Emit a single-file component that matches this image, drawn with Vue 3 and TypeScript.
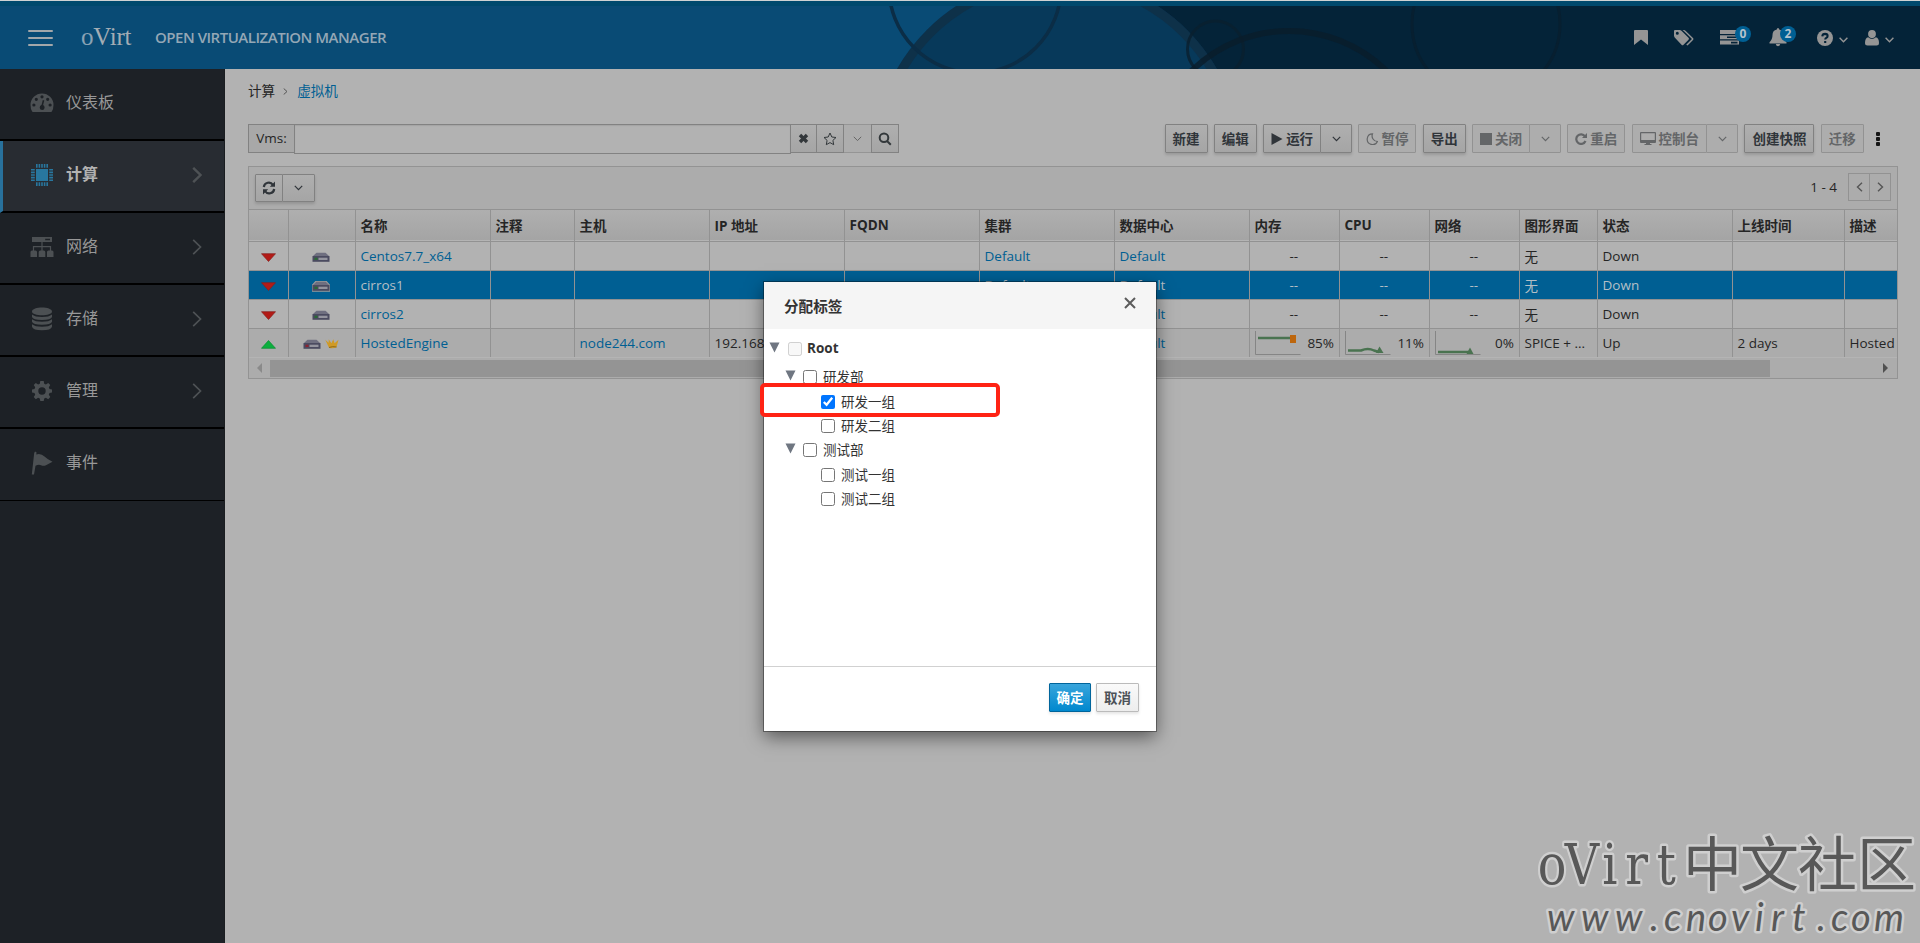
<script setup lang="ts">
import { ref } from 'vue';

interface MenuItem {
  label: string;
  icon: string;
  children: boolean;
}

interface Action {
  label: string;
  icon?: string;
  enabled: boolean;
  split?: boolean;
}

interface Vm {
  name: string;
  host: string;
  ip: string;
  cluster: string;
  dc: string;
  usage: string[];
  graphics: string;
  status: string;
  uptime: string;
  description: string;
}

interface Tag {
  label: string;
  level: number;
  checked: boolean;
  disabled?: boolean;
}

const menu: MenuItem[] = [
  { label: '仪表板', icon: 'dashboard', children: false },
  { label: '计算', icon: 'compute', children: true },
  { label: '网络', icon: 'network', children: true },
  { label: '存储', icon: 'storage', children: true },
  { label: '管理', icon: 'admin', children: true },
  { label: '事件', icon: 'events', children: false },
];
const activeMenu = ref('计算');

const actions: Action[] = [
  { label: '新建', enabled: true },
  { label: '编辑', enabled: true },
  { label: '运行', icon: 'play', enabled: true, split: true },
  { label: '暂停', icon: 'moon', enabled: false },
  { label: '导出', enabled: true },
  { label: '关闭', icon: 'stop', enabled: false, split: true },
  { label: '重启', icon: 'redo', enabled: false },
  { label: '控制台', icon: 'screen', enabled: false, split: true },
  { label: '创建快照', enabled: true },
  { label: '迁移', enabled: false },
];

const columns = ['', '', '名称', '注释', '主机', 'IP 地址', 'FQDN', '集群', '数据中心', '内存', 'CPU', '网络', '图形界面', '状态', '上线时间', '描述'];

const down = { host: '', ip: '', cluster: 'Default', dc: 'Default', usage: ['--', '--', '--'], graphics: '无', status: 'Down', uptime: '', description: '' };
const vms: Vm[] = [
  { name: 'Centos7.7_x64', ...down },
  { name: 'cirros1', ...down },
  { name: 'cirros2', ...down },
  {
    name: 'HostedEngine',
    host: 'node244.com',
    ip: '192.168.',
    cluster: 'Default',
    dc: 'Default',
    usage: ['85%', '11%', '0%'],
    graphics: 'SPICE + ...',
    status: 'Up',
    uptime: '2 days',
    description: 'Hosted',
  },
];
const selectedVm = ref('cirros1');

const tags = ref<Tag[]>([
  { label: 'Root', level: 0, checked: false, disabled: true },
  { label: '研发部', level: 1, checked: false },
  { label: '研发一组', level: 2, checked: true },
  { label: '研发二组', level: 2, checked: false },
  { label: '测试部', level: 1, checked: false },
  { label: '测试一组', level: 2, checked: false },
  { label: '测试二组', level: 2, checked: false },
]);
const showDialog = ref(true);
</script>

<template>
  <div class="page">
    <header class="masthead">
      <svg class="masthead-art" width="1060" height="63" viewBox="860 6 1060 63">
        <path d="M1057 6H1920V69H1057Z" fill="#042338" />
        <circle cx="1057" cy="160" r="184" fill="#07395a" />
        <circle cx="1057" cy="160" r="179.500" fill="none" stroke="#122c40" stroke-opacity=".65" stroke-width="9" />
        <circle cx="975" cy="-13" r="86" fill="none" stroke="#0b2d46" stroke-width="3.500" />
        <circle cx="1215.500" cy="49" r="28" fill="none" stroke="#0a1f2e" stroke-opacity=".8" stroke-width="3" />
        <circle cx="1289" cy="170" r="139" fill="none" stroke="#0a1d2b" stroke-opacity=".8" stroke-width="6" />
        <circle cx="1486" cy="24" r="74" fill="none" stroke="#071f30" stroke-width="3" />
      </svg>
      <div class="hamburger"><i></i><i></i><i></i></div>
      <div class="logo"><span>o</span>Virt</div>
      <div class="product">OPEN VIRTUALIZATION MANAGER</div>
      <nav class="tools">
        <svg class="t-bookmark" width="14" height="15" viewBox="0 0 14 15"><path d="M1 0H13Q14 0 14 1V15L7 9.500 0 15V1Q0 0 1 0Z" /></svg>
        <svg class="t-tags" width="20" height="16" viewBox="0 0 20 16">
          <path fill-rule="evenodd" d="M0 1Q0 0 1 0H6L7.500 .7 14.500 7.700Q15.500 8.700 14.500 9.700L9.500 14.700Q8.500 15.700 7.500 14.700L.7 7.500 0 6ZM3.300 1.800A1.500 1.500 0 1 0 3.300 4.800 1.500 1.500 0 1 0 3.300 1.800Z" />
          <path d="M8.500 0H10.200L11.500 .7 19 8Q20 9 19 10L13.500 15.500 12.200 14.800 17.500 9.500Q18 9 17.500 8.500L9.500 .7Z" />
        </svg>
        <div class="with-badge t-tasks">
          <svg width="19" height="15" viewBox="0 0 19 15"><path fill-rule="evenodd" d="M0 0H19V4H0ZM0 5.300H19V9.300H0ZM0 10.600H19V14.600H0ZM7 6.500V8.100H17.500V6.500ZM11 11.800V13.400H17.500V11.800Z" /></svg>
          <b>0</b>
        </div>
        <div class="with-badge t-bell">
          <svg width="18" height="19" viewBox="0 0 18 19"><path d="M9 0Q10.200 0 10.200 1.600 14.500 2.500 14.500 7 14.500 11.500 17.500 14.200V15.400H.5V14.200Q3.500 11.500 3.500 7 3.500 2.500 7.800 1.600 7.800 0 9 0ZM6.800 16H11.200Q10.800 18.200 9 18.200 7.200 18.200 6.800 16Z" /></svg>
          <b>2</b>
        </div>
        <div class="drop t-help">
          <svg width="16" height="16" viewBox="0 0 16 16">
            <circle cx="8" cy="8" r="8" />
            <path class="cut" d="M5.300 6.300Q5.500 3.900 8.100 3.900 10.600 4 10.600 6 10.600 7.300 9.300 7.900 8.300 8.400 8.200 9.500M8.200 10.900V12.900" />
          </svg>
          <svg class="caret" width="9" height="6" viewBox="0 0 9 6"><path d="M.6 .7 4.500 4.700 8.400 .7" /></svg>
        </div>
        <div class="drop t-user">
          <svg width="14" height="16" viewBox="0 0 14 16"><path d="M7 0A3.900 4.100 0 1 1 7 8.200 3.900 4.100 0 1 1 7 0ZM3.200 7.300Q7 10.500 10.800 7.300 14 8 14 13 14 15.500 11.500 15.500H2.500Q0 15.500 0 13 0 8 3.200 7.300Z" /></svg>
          <svg class="caret" width="9" height="6" viewBox="0 0 9 6"><path d="M.6 .7 4.500 4.700 8.400 .7" /></svg>
        </div>
      </nav>
    </header>

    <div class="body">
      <aside class="sidebar">
        <div
          v-for="item in menu"
          :key="item.label"
          class="menu-item"
          :class="{ active: item.label === activeMenu }"
          @click="activeMenu = item.label"
        >
          <svg class="menu-icon" width="24" height="24" viewBox="0 0 24 24">
            <path
              v-if="item.icon === 'dashboard'"
              fill-rule="evenodd"
              d="M12 2.500A11.500 11.500 0 0 1 23.500 14Q23.500 18 21.800 20.500 21.400 21 20.500 21H3.500Q2.600 21 2.200 20.500 .5 18 .5 14A11.500 11.500 0 0 1 12 2.500ZM12 4.200a1.600 1.600 0 1 0 0 3.200 1.600 1.600 0 1 0 0-3.200ZM6.300 6.700a1.600 1.600 0 1 0 0 3.200 1.600 1.600 0 1 0 0-3.200ZM17.700 6.700a1.600 1.600 0 1 0 0 3.200 1.600 1.600 0 1 0 0-3.200ZM3.900 12.400a1.600 1.600 0 1 0 0 3.200 1.600 1.600 0 1 0 0-3.200ZM20.100 12.400a1.600 1.600 0 1 0 0 3.200 1.600 1.600 0 1 0 0-3.200ZM12.800 9 11.600 13.800Q9.600 14.600 9.700 16.700 10 18.900 12.200 19 14.400 18.900 14.600 16.700 14.600 15 13.100 14.100L14.300 9.400Z"
            />
            <template v-else-if="item.icon === 'compute'">
              <path d="M6 6H18V18H6Z" />
              <path class="pins" d="M6.800 1V4.800M9.400 1V4.800M12 1V4.800M14.600 1V4.800M17.200 1V4.800M6.800 19.200V23M9.400 19.200V23M12 19.200V23M14.600 19.200V23M17.200 19.200V23M1 6.800H4.800M1 9.400H4.800M1 12H4.800M1 14.600H4.800M1 17.200H4.800M19.200 6.800H23M19.200 9.400H23M19.200 12H23M19.200 14.600H23M19.200 17.200H23" />
            </template>
            <path
              v-else-if="item.icon === 'network'"
              fill-rule="evenodd"
              d="M2 2H22V7H2ZM15.200 3.700V5.300H20V3.700ZM11.400 7H12.600V11H21.100V15.500H22Q23.500 15.500 23.500 17V22H17V17Q17 15.500 18.500 15.500H19.900V12.200H12.600V15.500H13.800Q15.300 15.500 15.300 17V22H8.700V17Q8.700 15.500 10.200 15.500H11.400V12.200H4.100V15.500H5.500Q7 15.500 7 17V22H.5V17Q.5 15.500 2 15.500H2.900V11H11.400Z"
            />
            <path
              v-else-if="item.icon === 'storage'"
              d="M12 .5C17 .5 22 2 22 4.500S17 8.300 12 8.300 2 7 2 4.500 7 .5 12 .5ZM2 7.500Q5 10 12 10T22 7.500V10Q21 13 12 13T2 10ZM2 12.300Q5 14.800 12 14.800T22 12.300V14.800Q21 17.800 12 17.800T2 14.800ZM2 17.200Q5 19.700 12 19.700T22 17.200V19.700Q21 23.300 12 23.300T2 19.700Z"
            />
            <path
              v-else-if="item.icon === 'admin'"
              fill-rule="evenodd"
              d="M10.300 2H13.700L14.200 4.700 15.900 5.400 18.200 3.900 20.300 6 18.800 8.200 19.500 9.900 22 10.400V13.600L19.500 14.100 18.800 15.800 20.300 18.100 18.200 20.200 15.900 18.700 14.200 19.400 13.700 22H10.300L9.800 19.400 8.100 18.700 5.800 20.200 3.700 18.100 5.200 15.800 4.500 14.100 2 13.600V10.400L4.500 9.900 5.200 8.200 3.700 6 5.800 3.900 8.100 5.400 9.800 4.700ZM12 8.300A3.700 3.700 0 1 0 12 15.700 3.700 3.700 0 1 0 12 8.300Z"
            />
            <path v-else d="M5 .5 6.500 1.200 6.300 3.400Q11 2 14.500 5.500 17 8 22.500 10.800L16 14.200Q13.500 15.500 11 14.200 8.500 13.200 5.500 14.800L4 23.500H1.800L4.200 2Z" />
          </svg>
          <span class="menu-label">{{ item.label }}</span>
          <svg v-if="item.children" class="menu-chevron" width="10" height="16" viewBox="0 0 10 16"><path d="M1.200 .8 8.500 8 1.200 15.200" /></svg>
        </div>
      </aside>

      <main class="content">
        <div class="breadcrumb">
          <span>计算</span>
          <svg width="5" height="7" viewBox="0 0 5 7"><path d="M.7 .5 4 3.500 .7 6.500" /></svg>
          <a>虚拟机</a>
        </div>

        <div class="action-row">
          <div class="search">
            <span class="search-prefix">Vms:</span>
            <div class="search-input"></div>
            <button class="clear"><svg width="11" height="11" viewBox="0 0 11 11"><path class="bold" d="M2 2 9 9M9 2 2 9" /></svg></button>
            <button class="star"><svg width="14" height="14" viewBox="0 0 14 14"><path d="M7 1 8.800 5 13 5.500 9.900 8.400 10.700 12.700 7 10.600 3.300 12.700 4.100 8.400 1 5.500 5.200 5Z" /></svg></button>
            <button class="dim"><svg width="9" height="6" viewBox="0 0 9 6"><path d="M.8 .8 4.500 4.600 8.200 .8" /></svg></button>
            <button class="go"><svg width="14" height="14" viewBox="0 0 14 14"><circle cx="6" cy="5.800" r="4.300" class="lens" /><path class="lens" d="M9 9 12.800 12.800" /></svg></button>
          </div>

          <div class="actions">
            <div v-for="a in actions" :key="a.label" class="btn-group" :class="{ disabled: !a.enabled }">
              <button>
                <svg v-if="a.icon === 'play'" width="12" height="12" viewBox="0 0 12 12"><path d="M.5 0 11.500 6 .5 12Z" /></svg>
                <svg v-else-if="a.icon === 'moon'" width="12" height="12" viewBox="0 0 12 12"><path class="line" d="M6.500 .8A5.400 5.400 0 1 0 11.500 8.500 5.600 5.600 0 0 1 6.500 .8Z" /></svg>
                <svg v-else-if="a.icon === 'stop'" width="12" height="12" viewBox="0 0 12 12"><path d="M0 0H12V12H0Z" /></svg>
                <svg v-else-if="a.icon === 'redo'" width="12" height="12" viewBox="0 0 12 12"><path class="thick" d="M10 3.300A4.800 4.800 0 1 0 10.500 8" /><path d="M12 0V5H7Z" /></svg>
                <svg v-else-if="a.icon === 'screen'" width="16" height="13" viewBox="0 0 16 13"><path fill-rule="evenodd" d="M1 0H15Q16 0 16 1V10Q16 11 15 11H10V12H11.500V13H4.500V12H6V11H1Q0 11 0 10V1Q0 0 1 0ZM1.200 1.200V8H14.800V1.200Z" /></svg>
                <span>{{ a.label }}</span>
              </button>
              <button v-if="a.split" class="toggle"><svg width="9" height="6" viewBox="0 0 9 6"><path class="line" d="M.8 .8 4.500 4.600 8.200 .8" /></svg></button>
            </div>
            <div class="kebab"><i></i><i></i><i></i></div>
          </div>
        </div>

        <section class="panel">
          <div class="panel-bar">
            <div class="btn-group refresh">
              <button>
                <svg width="14" height="14" viewBox="0 0 14 14"><path class="thick" d="M1.800 6A5 5 0 0 1 11 4M12.200 8A5 5 0 0 1 3 10" /><path d="M13 .5V5.800H7.800ZM1 13.500V8.200H6.200Z" /></svg>
              </button>
              <button class="toggle"><svg width="9" height="6" viewBox="0 0 9 6"><path class="line" d="M.8 .8 4.500 4.600 8.200 .8" /></svg></button>
            </div>
            <span class="range">1 - 4</span>
            <div class="pager">
              <span><svg width="7" height="10" viewBox="0 0 7 10"><path d="M6 .8 1.500 5 6 9.200" /></svg></span>
              <span><svg width="7" height="10" viewBox="0 0 7 10"><path d="M1 .8 5.500 5 1 9.200" /></svg></span>
            </div>
          </div>

          <div class="row head">
            <div v-for="(c, i) in columns" :key="i" class="cell">{{ c }}</div>
          </div>
          <div
            v-for="vm in vms"
            :key="vm.name"
            class="row"
            :class="{ selected: vm.name === selectedVm, up: vm.status === 'Up' }"
            @click="selectedVm = vm.name"
          >
            <div class="cell icon-cell">
              <svg v-if="vm.status === 'Up'" class="state" width="15" height="9" viewBox="0 0 15 9"><path d="M7.500 .5 14.500 8.300H.5Z" fill="#0caf3e" stroke="#0a8c31" stroke-width=".7" /></svg>
              <svg v-else class="state" width="15" height="9" viewBox="0 0 15 9"><path d="M.5 .7H14.500L7.500 8.500Z" fill="#b31b17" stroke="#86201d" stroke-width=".7" /></svg>
            </div>
            <div class="cell icon-cell servers">
              <svg width="18" height="11" viewBox="0 0 18 11">
                <path class="server-halo" d="M4 .5H14L17.500 4.500V10H.5V4.500Z" />
                <path d="M4.500 .8H13.500L17 4H1Z" fill="#6f6f80" />
                <path d="M.5 4H17.500V9.800H.5Z" fill="#4b4b60" />
                <path d="M6.500 5.700H15.500V8H6.500Z" fill="#94949e" />
                <path d="M2.500 5.700H5.500V8H2.500Z" :fill="vm.status === 'Up' ? '#8e2430' : '#2a6a35'" />
              </svg>
              <svg v-if="vm.status === 'Up'" width="14" height="10" viewBox="0 0 14 10"><path d="M.3 .8 3.600 3.800 3.800 .3 6.400 4.300 8.300 .3 9.600 4.300 13.500 .8 11.500 8.300Q7.500 10 4 8.700Z" fill="#d09a25" /><path d="M4 8.500Q7.500 7 11.500 8" fill="none" stroke="#8d6a1c" /></svg>
            </div>
            <div class="cell link">{{ vm.name }}</div>
            <div class="cell"></div>
            <div class="cell link">{{ vm.host }}</div>
            <div class="cell">{{ vm.ip }}</div>
            <div class="cell"></div>
            <div class="cell link">{{ vm.cluster }}</div>
            <div class="cell link">{{ vm.dc }}</div>
            <div v-for="(u, i) in vm.usage" :key="i" class="cell usage">
              <svg v-if="vm.status === 'Up'" width="46" height="24" viewBox="0 0 46 24">
                <path d="M.5 0V23.500H45.500" fill="none" stroke="#858585" />
                <template v-if="i === 0">
                  <path d="M3 7H35" stroke="#4a7350" stroke-width="2.500" />
                  <path d="M35 4H41V12H35Z" fill="#bd660d" />
                </template>
                <template v-else-if="i === 1">
                  <path d="M3 19.500H16Q23 16.500 29 19.500L34 21" fill="none" stroke="#4a7350" stroke-width="2.500" />
                  <path d="M34.500 15.500 38.500 22H31Z" fill="#4a7350" />
                </template>
                <template v-else>
                  <path d="M3 21H35" stroke="#4a7350" stroke-width="2.500" />
                  <path d="M35 16.500 38.500 23H31.500Z" fill="#4a7350" />
                </template>
              </svg>
              <span>{{ u }}</span>
            </div>
            <div class="cell">{{ vm.graphics }}</div>
            <div class="cell">{{ vm.status }}</div>
            <div class="cell">{{ vm.uptime }}</div>
            <div class="cell">{{ vm.description }}</div>
          </div>

          <div class="scrollbar">
            <svg width="5" height="10" viewBox="0 0 5 10"><path d="M5 0V10L0 5Z" fill="#8a8a8a" /></svg>
            <div class="track"><div class="thumb"></div></div>
            <svg width="5" height="10" viewBox="0 0 5 10"><path d="M0 0V10L5 5Z" fill="#505050" /></svg>
          </div>
        </section>
      </main>
    </div>

    <svg class="watermark" width="390" height="143" viewBox="1530 800 390 143">
      <text class="wm-latin" transform="translate(1530 884) scale(.85 1)" x="9 41 85 112 149">oVirt</text>
      <text class="wm-cjk" y="886" x="1683 1740 1798 1857">中文社区</text>
      <text class="wm-url" y="931" x="1547 1581 1615 1650 1664 1686 1708 1731 1755 1771 1792 1817 1831 1851 1874">www.cnovirt.com</text>
    </svg>

    <div v-if="showDialog" class="dialog">
      <div class="dialog-header">
        <h4>分配标签</h4>
        <svg width="12" height="12" viewBox="0 0 12 12" @click="showDialog = false"><path d="M1 1 11 11M11 1 1 11" /></svg>
      </div>
      <div class="dialog-body">
        <div v-for="tag in tags" :key="tag.label" class="tag" :class="'level-' + tag.level">
          <svg v-if="tag.level < 2" width="11" height="11" viewBox="0 0 11 11"><path d="M.5 .5H10.500L5.500 10.500Z" /></svg>
          <input v-model="tag.checked" type="checkbox" :disabled="tag.disabled" />
          <span>{{ tag.label }}</span>
        </div>
        <div class="highlight"></div>
      </div>
      <div class="dialog-footer">
        <button class="primary" @click="showDialog = false">确定</button>
        <button @click="showDialog = false">取消</button>
      </div>
    </div>
  </div>
</template>

<style>
body {
  background: #b2b2b2;
  overflow: hidden;
}
</style>

<style scoped>
.page {
  position: relative;
  display: flex;
  flex-direction: column;
  width: 1920px;
  height: 943px;
  overflow: hidden;
  background: #b2b2b2;
  color: #252525;
  font-family: 'Open Sans', 'Noto Sans CJK SC', sans-serif;
  font-size: 13.5px;
}

.page * {
  box-sizing: border-box;
}

svg {
  display: block;
  flex: none;
}

button {
  font-family: inherit;
  font-size: inherit;
}

/* masthead */
.masthead {
  position: relative;
  display: flex;
  align-items: center;
  flex: none;
  height: 69px;
  padding: 0 26px 0 28px;
  border-top: 1px solid #cfd2d3;
  background: linear-gradient(#00496d 5px, #094b75 5px);
}

.masthead-art {
  position: absolute;
  right: 0;
  bottom: 0;
}

.hamburger {
  display: flex;
  flex-direction: column;
  gap: 5px;
  width: 25px;
  padding-top: 6px;
}

.hamburger i {
  height: 2px;
  border-radius: 1px;
  background: #a3a7aa;
}

.logo {
  width: 75px;
  padding: 4px 0 0 28px;
  color: #a3adb4;
  font-family: 'Liberation Serif', serif;
  font-size: 25px;
  line-height: 28px;
  letter-spacing: -0.2px;
}

.logo span {
  color: #8aa2b4;
}

.product {
  padding-top: 4px;
  margin-left: 27px;
  color: #94a7b5;
  font-size: 15px;
  font-weight: 600;
  letter-spacing: -0.48px;
  white-space: nowrap;
}

.tools {
  position: relative;
  display: flex;
  align-items: center;
  margin-left: auto;
  padding-top: 5px;
  fill: #959595;
}

.t-tags {
  margin-left: 26px;
}

.t-tasks {
  margin-left: 26px;
}

.t-bell {
  margin-left: 30px;
}

.t-help {
  margin-left: 30px;
}

.t-user {
  margin-left: 17px;
}

.with-badge {
  position: relative;
}

.with-badge b {
  position: absolute;
  top: -4px;
  left: 15px;
  width: 16px;
  height: 16px;
  border-radius: 50%;
  background: #005f93;
  color: #b4c3cd;
  font-size: 12px;
  line-height: 15px;
  text-align: center;
}

.t-bell b {
  top: -2px;
  left: 11px;
}

.drop {
  display: flex;
  align-items: center;
  gap: 6px;
}

.caret {
  margin-top: 4px;
  fill: none;
  stroke: #959595;
  stroke-width: 1.4;
}

.cut {
  fill: none;
  stroke: #042338;
  stroke-width: 2.1;
}

.body {
  display: flex;
  flex: 1;
}

/* sidebar */
.sidebar {
  width: 225px;
  border-right: 1px solid #1a1d20;
  background: #1d2126;
}

.menu-item {
  display: flex;
  align-items: center;
  height: 72px;
  padding: 0 22px 3px 30px;
  border-bottom: 2px solid #000;
  color: #989898;
  font-size: 16px;
}

.menu-item:last-child {
  border-bottom-width: 1px;
  padding-bottom: 4px;
}

.menu-item.active {
  padding-left: 27px;
  border-left: 3px solid #28719c;
  background: #282c32;
  color: #b2b2b2;
  font-weight: 600;
}

.menu-icon {
  fill: #4c5053;
}

.active .menu-icon {
  fill: #28779f;
}

.pins {
  stroke: #28779f;
  stroke-width: 1.6;
}

.menu-label {
  margin-left: 12px;
  padding-bottom: 3px;
}

.menu-chevron {
  margin-left: auto;
  fill: none;
  stroke: #4e5255;
  stroke-width: 1.7;
}

.active .menu-chevron {
  stroke-width: 2.4;
}

/* content */
.content {
  flex: 1;
  padding: 0 22px 0 23px;
}

.breadcrumb {
  display: flex;
  align-items: center;
  height: 45px;
  padding-bottom: 4px;
  font-size: 13.6px;
}

.breadcrumb svg {
  margin: 4px 9px 0 8px;
  fill: none;
  stroke: #555;
}

.breadcrumb a {
  color: #005f93;
}

.action-row {
  display: flex;
  height: 30px;
  margin: 10px 0 12px;
}

.search {
  display: flex;
  align-items: flex-start;
  width: 651px;
}

.search-prefix {
  width: 46px;
  height: 29px;
  border: 1px solid #828282;
  border-right: 0;
  background: #a8a8a8;
  line-height: 26px;
  text-align: center;
}

.search-input {
  flex: 1;
  height: 30px;
  border: 1px solid #828282;
  background: #b2b2b2;
  box-shadow: inset 0 1px 1px rgba(0, 0, 0, 0.08);
}

.search button {
  display: flex;
  align-items: center;
  justify-content: center;
  width: 28px;
  height: 29px;
  padding: 0;
  border: 1px solid #828282;
  border-left: 0;
  background: linear-gradient(#afafaf, #a5a5a5);
  fill: none;
  stroke: #33383b;
}

.search button.clear {
  width: 26px;
}

.search button.star {
  width: 27px;
}

.search button.dim {
  width: 27px;
  border-color: #959595;
  border-right: 0;
  background: #adadad;
  stroke: #666;
}

.search button.go {
  border-left: 1px solid #828282;
}

.bold {
  stroke-width: 3.4;
}

.lens {
  stroke-width: 2;
}

.actions {
  display: flex;
  align-items: flex-start;
  gap: 6.3px;
  margin-left: auto;
  padding-right: 18px;
}

.btn-group {
  display: flex;
  height: 29px;
  border-radius: 1px;
  box-shadow: 0 2px 3px rgba(0, 0, 0, 0.14);
}

.btn-group button {
  display: flex;
  align-items: center;
  gap: 3px;
  padding: 0 7px;
  border: 1px solid #818181;
  border-radius: 1px;
  background: linear-gradient(#afafaf, #a5a5a5);
  color: #30353a;
  fill: #30353a;
  font-weight: 600;
  white-space: nowrap;
}

.btn-group button span {
  padding-bottom: 1px;
}

.btn-group .toggle {
  justify-content: center;
  width: 32px;
  margin-left: -1px;
  padding: 0;
}

.btn-group .line,
.btn-group .thick {
  fill: none;
  stroke: #30353a;
  stroke-width: 1.2;
}

.btn-group .thick {
  stroke-width: 2.2;
}

.btn-group.disabled {
  box-shadow: none;
}

.btn-group.disabled button {
  border-color: #929292;
  background: #adadad;
  color: #646668;
  fill: #646668;
}

.btn-group.disabled .line,
.btn-group.disabled .thick {
  stroke: #646668;
}

.kebab {
  display: flex;
  flex-direction: column;
  gap: 1px;
  margin: 8px 0 0 6px;
}

.kebab i {
  width: 4px;
  height: 4px;
  border-radius: 1px;
  background: #151515;
}

/* table */
.panel {
  border: 1px solid #939393;
  background: #acacac;
}

.panel-bar {
  display: flex;
  align-items: flex-start;
  height: 42px;
  padding: 6px 6px 0;
}

.refresh {
  height: 28px;
  margin-top: 1px;
}

.refresh button {
  padding: 0 6px;
}

.refresh .toggle {
  width: 33px;
}

.range {
  margin: 5px 11px 0 auto;
}

.pager {
  display: flex;
  width: 43px;
  height: 28px;
  border: 1px solid #929292;
}

.pager span {
  display: flex;
  align-items: center;
  justify-content: center;
  flex: 1;
  fill: none;
  stroke: #555;
  stroke-width: 1.4;
}

.pager span + span {
  border-left: 1px solid #929292;
}

.row {
  display: grid;
  grid-template-columns: 40px 67px 135px 84px repeat(5, 135px) repeat(3, 90px) 78px 135px 112px 51px;
  height: 29px;
  border-bottom: 1px solid #929292;
  background: #b2b2b2;
}

.cell {
  display: flex;
  align-items: center;
  padding: 0 4px 0 4.5px;
  border-right: 1px solid #929292;
  overflow: hidden;
  white-space: nowrap;
}

.cell:last-child {
  padding-right: 0;
  border-right: 0;
}

.head {
  height: 33px;
  border-top: 1px solid #929292;
  background: linear-gradient(#afafaf, #a4a4a4);
  font-weight: 700;
  box-shadow: inset 0 -1px 0 #b4b4b4;
}

.head .cell {
  padding-top: 0;
  padding-bottom: 2px;
}

.row.up {
  border-bottom-color: #b4b4b4;
  background: #acacac;
}

.row.selected {
  background: #005f93;
  color: #b4bfc6;
}

.link {
  color: #005f93;
}

.selected .link {
  color: #b4bfc6;
}

.row .icon-cell {
  justify-content: center;
  gap: 4px;
  padding: 3px 0 0;
}

.row .servers {
  padding: 2px 2px 0 0;
}

.state {
  margin-left: -1px;
}

.server-halo {
  fill: none;
}

.selected .server-halo {
  stroke: #9a9a9a;
  stroke-width: 1.6;
}

.usage {
  justify-content: center;
  padding-right: 6px;
}

.up .usage {
  justify-content: space-between;
  padding-right: 5px;
}

.scrollbar {
  display: flex;
  align-items: center;
  height: 20px;
  padding: 0 9px 0 8px;
}

.track {
  flex: 1;
  padding: 0 113px 0 8px;
}

.thumb {
  height: 17px;
  background: #949494;
}

/* watermark */
.watermark {
  position: absolute;
  right: 0;
  bottom: 0;
}

.watermark text {
  fill: #585858;
  stroke: #cfcfcf;
  stroke-width: 5px;
  stroke-linejoin: round;
  paint-order: stroke;
}

.wm-latin {
  font-family: 'DejaVu Serif', serif;
  font-size: 56px;
}

.wm-cjk {
  font-family: 'Noto Sans CJK SC', sans-serif;
  font-size: 59px;
}

.wm-url {
  font-family: Lato, sans-serif;
  font-size: 38px;
  font-style: italic;
}

/* dialog */
.dialog {
  position: absolute;
  top: 282px;
  left: 764px;
  display: flex;
  flex-direction: column;
  width: 392px;
  height: 449px;
  background: #fff;
  box-shadow: 0 0 0 1px rgba(0, 0, 0, 0.35), 0 6px 17px rgba(0, 0, 0, 0.5);
}

.dialog-header {
  display: flex;
  justify-content: space-between;
  height: 47px;
  padding: 14px 20px 0;
  background: #f5f5f5;
}

.dialog-header h4 {
  margin: 0;
  color: #333;
  font-size: 14.6px;
  font-weight: 600;
  line-height: 20px;
}

.dialog-header svg {
  margin-top: 1px;
  stroke: #5c5c5c;
  stroke-width: 2;
}

.dialog-body {
  position: relative;
  flex: 1;
  padding-top: 7px;
}

.tag {
  display: flex;
  align-items: center;
  height: 24.4px;
  color: #333;
}

.tag svg {
  margin: -3px 7px 0 0;
  fill: #6f7681;
}

.tag input {
  width: 14px;
  height: 14px;
  margin: 0 6px 0 0;
}

.tag span {
  padding-bottom: 2px;
}

.level-0 {
  height: 29px;
  padding-left: 5px;
  padding-bottom: 4px;
  font-weight: 700;
}

.level-0 svg {
  margin-right: 8px;
}

.level-0 input {
  margin-right: 5px;
}

.level-1 {
  padding-left: 21px;
}

.level-2 {
  padding-left: 57px;
}

.highlight {
  position: absolute;
  top: 54px;
  left: -4px;
  width: 240px;
  height: 34px;
  border: 4px solid #ff2314;
  border-radius: 5px;
}

.dialog-footer {
  display: flex;
  justify-content: flex-end;
  gap: 5px;
  height: 65px;
  padding: 16px 17px 0 0;
  border-top: 1px solid #d1d1d1;
}

.dialog-footer button {
  height: 29px;
  padding: 0 7px 1px;
  border: 1px solid #bbb;
  border-radius: 1px;
  background: linear-gradient(#fafafa, #ededed);
  box-shadow: 0 2px 3px rgba(0, 0, 0, 0.1);
  color: #4d5258;
  font-weight: 600;
}

.dialog-footer .primary {
  padding: 0 6.5px 1px;
  border-color: #00659c;
  background: linear-gradient(#39a5dc, #0088ce);
  color: #fff;
}
</style>
